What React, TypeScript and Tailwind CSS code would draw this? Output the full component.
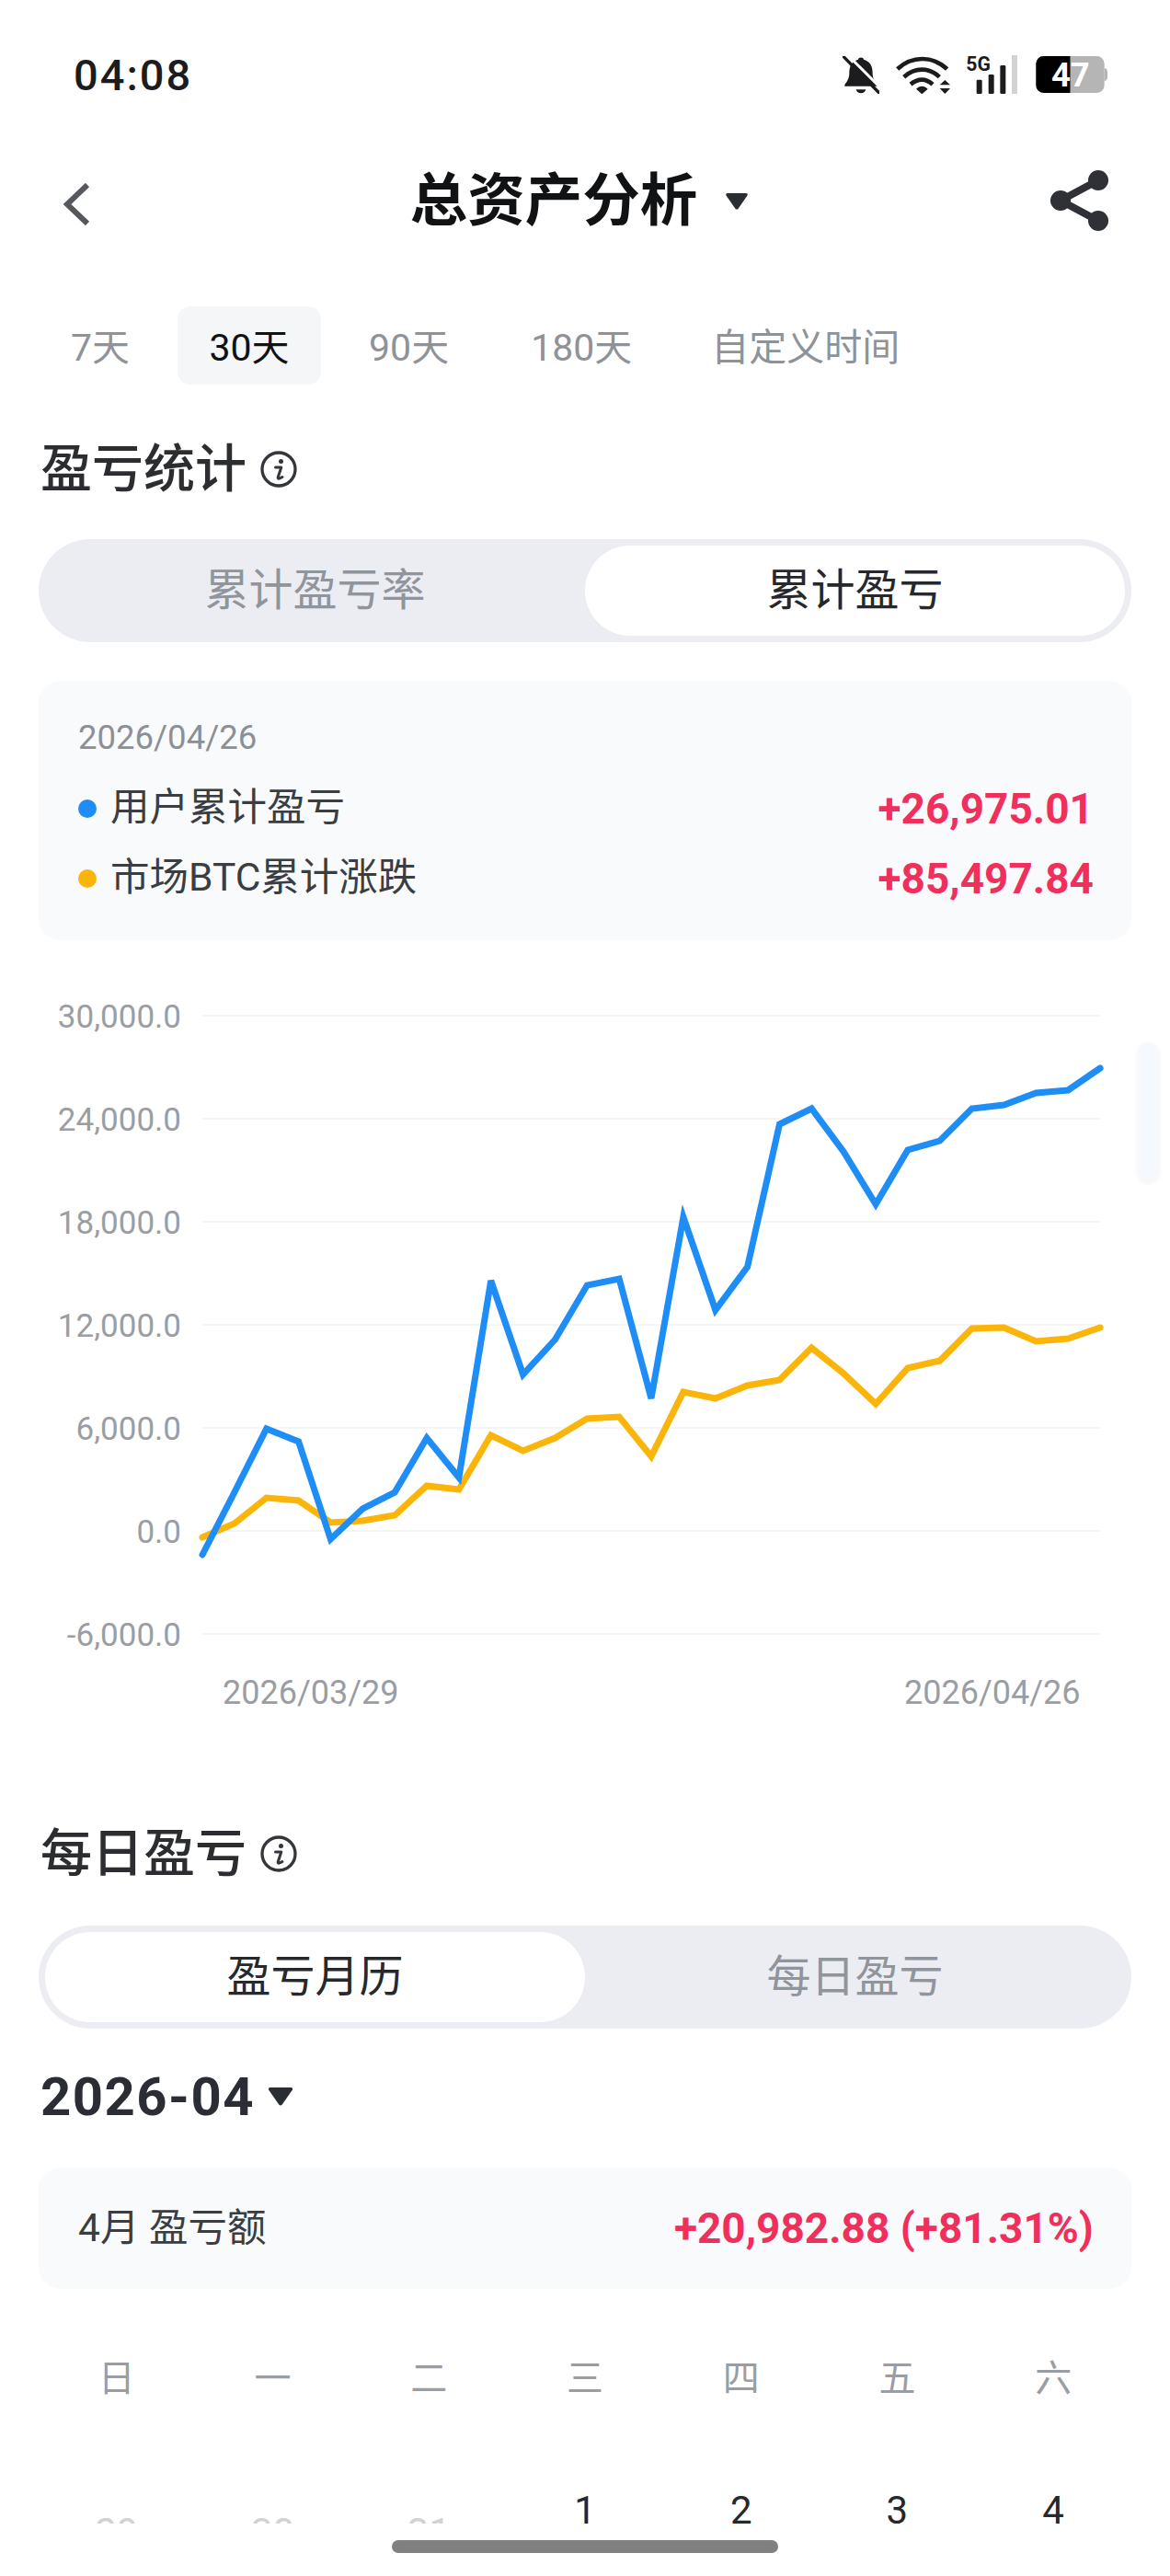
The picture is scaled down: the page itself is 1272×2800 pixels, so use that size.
import type { ReactNode } from "react";

const blueLine = [1690, 1622, 1553, 1567, 1673, 1640, 1622, 1563, 1606, 1392, 1494, 1456, 1397, 1390, 1520, 1323, 1424, 1377, 1222, 1205, 1252, 1309, 1250, 1240, 1205, 1201, 1188, 1185, 1161];
const yellowLine = [1671, 1656, 1628, 1631, 1655, 1653, 1647, 1615, 1619, 1560, 1577, 1563, 1542, 1540, 1583, 1513, 1520, 1506, 1500, 1465, 1493, 1526, 1487, 1479, 1444, 1443, 1458, 1455, 1443];

const gridLines = [
  { label: "30,000.0", y: 1104 },
  { label: "24,000.0", y: 1216 },
  { label: "18,000.0", y: 1328 },
  { label: "12,000.0", y: 1440 },
  { label: "6,000.0", y: 1552 },
  { label: "0.0", y: 1664 },
  { label: "-6,000.0", y: 1776 },
];

const weekDays = ["日", "一", "二", "三", "四", "五", "六"];
const firstRow = [
  { day: "29", muted: true },
  { day: "30", muted: true },
  { day: "31", muted: true },
  { day: "1", muted: false },
  { day: "2", muted: false },
  { day: "3", muted: false },
  { day: "4", muted: false },
];

function toPoints(line: number[]) {
  return line.map((y, index) => `${(220 + index * 34.86).toFixed(1)},${y}`).join(" ");
}

function BellOffIcon() {
  return (
    <svg width="40" height="41" viewBox="110 64 120 122">
      <path d="M170 68c6 0 9 3 9 7 22 6 29 24 29 44 0 18 8 29 14 36 3 4 1 7-3 7H121c-4 0-6-3-3-7 6-7 14-18 14-36 0-20 7-38 29-44 0-4 3-7 9-7z" fill="#1c1c1e" />
      <path d="M154 172h32c-2 8-8 12-16 12s-14-4-16-12z" fill="#1c1c1e" />
      <path d="M125 58l112 112" stroke="#fff" strokeWidth="9" />
      <path d="M114 66l114 116" stroke="#1c1c1e" strokeWidth="10" strokeLinecap="round" />
    </svg>
  );
}

function WifiIcon() {
  return (
    <svg width="60" height="42" viewBox="285 60 180 126">
      <g fill="none" stroke="#1c1c1e" strokeWidth="14">
        <path d="M290 105c48-44 114-44 162 0" />
        <path d="M311 131c36-32 82-32 116 0" />
        <path d="M333 155c24-20 50-20 72 0" />
      </g>
      <path d="M351 170c11-12 27-12 38 0l-19 17z" fill="#1c1c1e" />
      <path d="M428 157l17-16 17 16zM428 168h34l-17 18z" fill="#1c1c1e" />
    </svg>
  );
}

function SignalIcon() {
  return (
    <svg width="56" height="42" viewBox="510 62 168 126">
      <text x="511" y="114" fontSize="66" fontWeight="700" fill="#1c1c1e" fontFamily="Roboto, sans-serif" textLength="80" lengthAdjust="spacingAndGlyphs">5G</text>
      <rect x="545" y="142" width="18" height="46" rx="4" fill="#1c1c1e" />
      <rect x="584" y="125" width="18" height="63" rx="4" fill="#1c1c1e" />
      <rect x="622" y="95" width="18" height="93" rx="4" fill="#1c1c1e" />
      <rect x="660" y="62" width="18" height="126" fill="#d2d2d2" />
    </svg>
  );
}

function BatteryIcon() {
  return (
    <svg width="78" height="40" viewBox="741 70 231 118">
      <defs>
        <clipPath id="battery-used">
          <rect x="741" y="70" width="111" height="118" />
        </clipPath>
      </defs>
      <rect x="742" y="70" width="220" height="118" rx="24" fill="#b5b5b5" />
      <path d="M962 108c6 0 10 6 10 12v18c0 6-4 12-10 12z" fill="#b5b5b5" />
      <rect x="742" y="70" width="220" height="118" rx="24" fill="#000" clipPath="url(#battery-used)" />
      <text x="853" y="168" fontSize="108" fontWeight="700" fill="#fff" textAnchor="middle" fontFamily="Roboto, sans-serif">47</text>
    </svg>
  );
}

function ShareIcon() {
  return (
    <svg width="64" height="68" viewBox="1141 184 64 68" fill="#2f3136">
      <path d="M1194 196l-41 22 41 22" fill="none" stroke="#2f3136" strokeWidth="8" />
      <circle cx="1194" cy="196" r="11" />
      <circle cx="1153" cy="218" r="11" />
      <circle cx="1194" cy="240" r="11" />
    </svg>
  );
}

function InfoIcon() {
  return (
    <svg width="40" height="40" viewBox="0 0 40 40" fill="none" className="ml-[15px]">
      <circle cx="20" cy="20" r="18" stroke="#33363b" strokeWidth="3.3" />
      <path d="M16.5 18h6.3l-3.5 10.4c-.6 2 1 2.6 4.6.2" stroke="#33363b" strokeWidth="3" strokeLinecap="round" strokeLinejoin="round" />
      <circle cx="22.5" cy="11.6" r="2.5" fill="#33363b" />
    </svg>
  );
}

function Caret({ className }: { className: string }) {
  return (
    <svg viewBox="0 0 26 20" className={className}>
      <path d="M2 0h22c2 0 2.600 1.500 1.600 3L14.800 18.500c-1 1.400-2.600 1.400-3.600 0L.4 3C-.6 1.500 0 0 2 0z" fill="#2b2d35" />
    </svg>
  );
}

function SectionTitle({ children, className }: { children: ReactNode; className: string }) {
  return (
    <div className={`flex h-[56px] items-center px-[44px] ${className}`}>
      <h2 className="text-[56px] leading-none font-medium text-[#2b2d31]">{children}</h2>
      <InfoIcon />
    </div>
  );
}

function Segment({ left, right, active, className }: { left: string; right: string; active: "left" | "right"; className: string }) {
  const on = "rounded-full bg-white text-[#26282c]";
  const off = "text-[#90949b]";
  return (
    <div className={`mx-[42px] flex h-[112px] rounded-full bg-[#ecedf3] p-[7px] text-[48px] leading-none ${className}`}>
      <div className={`flex flex-1 items-center justify-center ${active === "left" ? on : off}`}>{left}</div>
      <div className={`flex flex-1 items-center justify-center ${active === "right" ? on : off}`}>{right}</div>
    </div>
  );
}

function LegendRow({ color, label, value, className }: { color: string; label: string; value: string; className: string }) {
  return (
    <div className={`flex h-[60px] items-center justify-between ${className}`}>
      <div className="flex items-center">
        <span className={`mr-[15px] size-[20px] rounded-full ${color}`} />
        <span className="text-[42.5px] leading-none text-[#3a3d42]">{label}</span>
      </div>
      <span className="text-[46px] leading-none font-bold text-[#f0305c]">{value}</span>
    </div>
  );
}

export default function App() {
  return (
    <div className="relative h-[2800px] w-[1272px] overflow-hidden bg-white font-['Roboto','Noto_Sans_CJK_SC',sans-serif]">
      <div className="flex h-[162px] items-center justify-between pr-[68px] pl-[80px]">
        <span className="text-[47px] leading-none font-medium tracking-[2px] text-[#1c1c1e]">04:08</span>
        <div className="flex items-center">
          <BellOffIcon />
          <div className="ml-[18px]"><WifiIcon /></div>
          <div className="ml-[16px]"><SignalIcon /></div>
          <div className="ml-[20px]"><BatteryIcon /></div>
        </div>
      </div>

      <header className="relative flex h-[112px] items-center justify-center">
        <svg width="30" height="46" viewBox="0 0 30 46" fill="none" className="absolute top-[37px] left-[68px]">
          <path d="M27 2L5 23l22 21" stroke="#55585d" strokeWidth="6" />
        </svg>
        <div className="flex items-center pt-[2px] pr-[12px]">
          <h1 className="text-[62.5px] leading-none font-bold text-[#111214]">总资产分析</h1>
          <Caret className="ml-[30px] h-[18px] w-[26px]" />
        </div>
        <div className="absolute left-[1141px]"><ShareIcon /></div>
      </header>

      <nav className="mt-[59px] flex h-[85px] items-center pl-[77px] text-[41px] leading-none text-[#8f9297]">
        <span className="pt-[6px]">7天</span>
        <span className="ml-[52px] flex h-[85px] w-[156px] items-center justify-center rounded-[14px] bg-[#f4f6f8] pt-[6px] text-[#111214]">30天</span>
        <span className="ml-[52px] pt-[6px]">90天</span>
        <span className="ml-[89px] pt-[6px]">180天</span>
        <span className="ml-[86px] pt-[6px]">自定义时间</span>
      </nav>

      <SectionTitle className="mt-[64px]">盈亏统计</SectionTitle>
      <Segment className="mt-[48px]" left="累计盈亏率" right="累计盈亏" active="right" />

      <section className="mx-[42px] mt-[42px] h-[282px] rounded-[24px] bg-[#f8fafc] pt-[44px] pr-[41px] pl-[43px]">
        <p className="text-[36.5px] leading-none text-[#8c9096]">2026/04/26</p>
        <LegendRow className="mt-[28px]" color="bg-[#1e8df5]" label="用户累计盈亏" value="+26,975.01" />
        <LegendRow className="mt-[16px]" color="bg-[#fbb40a]" label="市场BTC累计涨跌" value="+85,497.84" />
      </section>

      <svg width="1272" height="785" viewBox="0 1075 1272 785" className="mt-[53px] block">
        {gridLines.map((line) => (
          <g key={line.label}>
            <line x1="220" x2="1196" y1={line.y} y2={line.y} stroke="#f5f6f8" strokeWidth="2" />
            <text x="197" y={line.y + 13} textAnchor="end" fontSize="35" fill="#9a9ea4">{line.label}</text>
          </g>
        ))}
        <polyline points={toPoints(yellowLine)} fill="none" stroke="#fbb40a" strokeWidth="7" strokeLinejoin="miter" strokeLinecap="round" />
        <polyline points={toPoints(blueLine)} fill="none" stroke="#1e8df5" strokeWidth="7" strokeLinejoin="miter" strokeLinecap="round" />
        <text x="242" y="1852" fontSize="36" fill="#9a9ea4">2026/03/29</text>
        <text x="983" y="1852" fontSize="36" fill="#9a9ea4">2026/04/26</text>
      </svg>

      <SectionTitle className="mt-[127px]">每日盈亏</SectionTitle>
      <Segment className="mt-[50px]" left="盈亏月历" right="每日盈亏" active="left" />

      <div className="mt-[44px] flex h-[60px] items-center px-[44px]">
        <span className="text-[58px] leading-none font-bold tracking-[1.5px] text-[#2b2d35]">2026-04</span>
        <Caret className="ml-[15px] h-[20px] w-[26px]" />
      </div>

      <section className="mx-[42px] mt-[47px] flex h-[132px] items-center justify-between rounded-[24px] bg-[#f8fafc] pr-[41px] pl-[43px]">
        <span className="text-[42.5px] leading-none text-[#3a3d42]">4月 盈亏额</span>
        <span className="text-[46px] leading-none font-bold text-[#f0305c]">+20,982.88 (+81.31%)</span>
      </section>

      <div className="mx-[42px] mt-[73px] grid h-[50px] grid-cols-7 items-center text-center text-[40px] leading-none text-[#9a9ea4]">
        {weekDays.map((day) => (
          <span key={day}>{day}</span>
        ))}
      </div>

      <div className="mx-[42px] grid h-[132px] grid-cols-7 overflow-hidden text-center text-[42px] leading-none">
        {firstRow.map((cell) => (
          <span key={cell.day} className={cell.muted ? "pt-[121px] text-[#d0d2d6]" : "pt-[97px] text-[#26282c]"}>
            {cell.day}
          </span>
        ))}
      </div>

      {/* floating bits over the page */}
      <div className="absolute top-[1135px] left-[1238px] h-[150px] w-[21px] rounded-full bg-[#f5f8fc] shadow-[0_0_6px_rgba(0,0,0,0.08)]" />
      <div className="absolute top-[2761px] left-[426px] h-[14px] w-[420px] rounded-full bg-[#808080]" />
    </div>
  );
}
